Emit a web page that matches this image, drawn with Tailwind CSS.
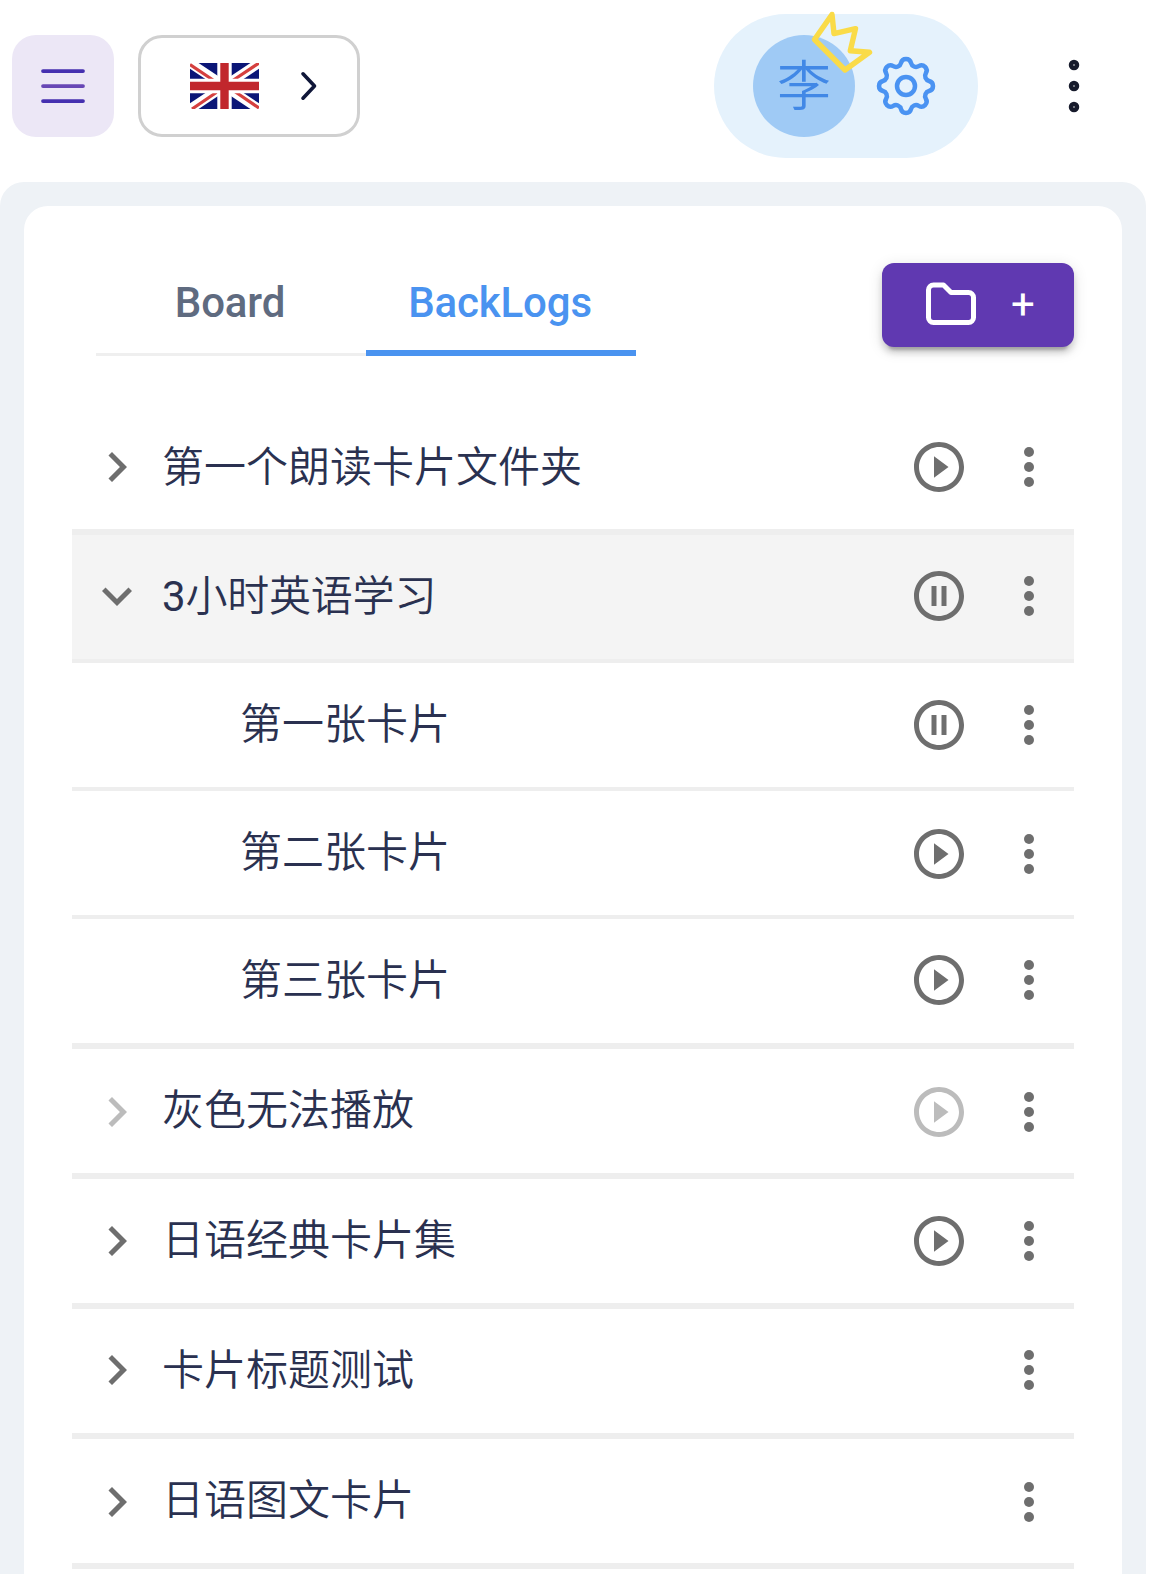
<!DOCTYPE html>
<html lang="zh">
<head>
<meta charset="utf-8">
<title>BackLogs</title>
<script src="https://cdn.jsdelivr.net/npm/@tailwindcss/browser@4"></script>
</head>
<body class="w-[1150px] h-[1574px] overflow-hidden bg-white font-[Roboto,'Noto_Sans_CJK_SC',sans-serif] text-[#2a3150]">
<svg class="hidden">
  <symbol id="right" viewBox="0 0 24 24"><path d="M10 6 8.59 7.41 13.17 12l-4.58 4.59L10 18l6-6z"/></symbol>
  <symbol id="down" viewBox="0 0 24 24"><path d="M16.59 8.59 12 13.17 7.41 8.59 6 10l6 6 6-6z"/></symbol>
  <symbol id="more" viewBox="0 0 24 24"><circle cx="12" cy="6" r="2"/><circle cx="12" cy="12" r="2"/><circle cx="12" cy="18" r="2"/></symbol>
  <symbol id="play" viewBox="0 0 24 24"><path d="M12 2C6.48 2 2 6.48 2 12s4.48 10 10 10 10-4.48 10-10S17.52 2 12 2zm0 18c-4.41 0-8-3.59-8-8s3.59-8 8-8 8 3.59 8 8-3.59 8-8 8zM10 7.7v8.6l5.8-4.3z"/></symbol>
  <symbol id="pause" viewBox="0 0 24 24"><path d="M12 2C6.48 2 2 6.48 2 12s4.48 10 10 10 10-4.48 10-10S17.52 2 12 2zm0 18c-4.41 0-8-3.59-8-8s3.59-8 8-8 8 3.59 8 8-3.59 8-8 8zM9 8h2v8H9zM13 8h2v8h-2z"/></symbol>
</svg>

<header class="flex h-[172px] items-center pl-3 pr-[40px] mb-[10px]">
  <button class="flex size-[102px] items-center justify-center rounded-3xl bg-[#ece7f6]">
    <svg class="size-[60px]" viewBox="0 0 24 24" fill="none" stroke-width="1.5" stroke-linecap="round"><path d="M4 6h16M4 18h16" stroke="#4530b0"/><path d="M4 12h16" stroke="#6747b5"/></svg>
  </button>
  <button class="ml-6 flex h-[102px] w-[222px] items-center rounded-3xl border-[3px] border-[#d0d0d0] pl-[49px]">
    <svg class="h-[46px] w-[69px]" viewBox="0 0 69 46">
      <rect width="69" height="46" fill="#0b1677"/>
      <path d="M0 0 69 46M69 0 0 46" stroke="#fff" stroke-width="9.5"/>
      <path d="M0 1.5 23 17M69 0 42 18M2 46 27 29M69 45 44 28" stroke="#d5403f" stroke-width="3.2"/>
      <path d="M34.5 0v46M0 23h69" stroke="#fff" stroke-width="14.4"/>
      <path d="M34.5 0v46M0 23h69" stroke="#c1272d" stroke-width="8.4"/>
    </svg>
    <svg class="ml-[40px] h-[32px] w-[20px]" viewBox="0 0 20 32" fill="none" stroke="#0f1638" stroke-width="3.6" stroke-linecap="round" stroke-linejoin="round"><path d="M4 3.8 15.5 16 4 28.2"/></svg>
  </button>
  <div class="relative ml-auto flex h-[144px] w-[264px] items-center rounded-full bg-[#e5f2fc] pl-[39px]">
    <div class="flex size-[102px] items-center justify-center rounded-full bg-[#9fcaf5] pt-[4px] text-[54px] font-[350] leading-none text-[#4188e6]">李</div>
    <svg class="ml-[15px] size-[72px]" viewBox="0 0 24 24" fill="none" stroke="#4a93f2" stroke-width="1.5" stroke-linecap="round" stroke-linejoin="round"><path d="M10.325 4.317c.426 -1.756 2.924 -1.756 3.35 0a1.724 1.724 0 0 0 2.573 1.066c1.543 -.94 3.31 .826 2.37 2.37a1.724 1.724 0 0 0 1.065 2.572c1.756 .426 1.756 2.924 0 3.35a1.724 1.724 0 0 0 -1.066 2.573c.94 1.543 -.826 3.31 -2.37 2.37a1.724 1.724 0 0 0 -2.572 1.065c-.426 1.756 -2.924 1.756 -3.35 0a1.724 1.724 0 0 0 -2.573 -1.066c-1.543 .94 -3.31 -.826 -2.37 -2.37a1.724 1.724 0 0 0 -1.065 -2.572c-1.756 -.426 -1.756 -2.924 0 -3.35a1.724 1.724 0 0 0 1.066 -2.573c-.94 -1.543 .826 -3.31 2.37 -2.37c1 .608 2.296 .07 2.572 -1.065z"/><circle cx="12" cy="12" r="3"/></svg>
    <svg class="absolute -top-[4px] left-[96px] h-[64px] w-[64px]" viewBox="0 0 64 64" fill="none" stroke="#fadb48" stroke-width="5.4" stroke-linejoin="round"><path d="M22 4.5 4.5 29.5 35 60 59.5 42.3 40.3 40.7 45.5 18.7 24 23.6z"/></svg>
  </div>
  <svg class="ml-[60px] size-[72px] shrink-0" viewBox="0 0 24 24" fill="none" stroke="#171b2c" stroke-width="1.5"><circle cx="12" cy="5" r="1"/><circle cx="12" cy="12" r="1"/><circle cx="12" cy="19" r="1"/></svg>
</header>

<div class="h-[1420px] w-[1146px] rounded-3xl bg-[#eef2f6] p-6">
  <main class="h-[1400px] rounded-3xl bg-white px-12 pt-[57px]">
    <div class="flex h-[142px] items-start justify-between pl-6">
      <nav class="flex h-[93px] text-[42px] font-medium leading-[49px] tracking-[-0.15px]">
        <div class="flex w-[270px] justify-center border-b-[3px] border-[#efefef] pr-[2px] pt-[15px] text-[#5f6b80]">Board</div>
        <div class="flex w-[270px] justify-center border-b-[6px] border-[#4a93f0] pr-[2px] pt-[15px] text-[#4a93f0]">BackLogs</div>
      </nav>
      <button class="flex h-[84px] w-[192px] items-center rounded-xl bg-[#6039b1] pl-[39px] text-[42px] text-white shadow-[0_9px_3px_-6px_rgba(0,0,0,0.2),0_6px_6px_rgba(0,0,0,0.14),0_3px_15px_rgba(0,0,0,0.12)]">
        <svg class="size-[60px]" viewBox="0 0 24 24" fill="none" stroke="#fff" stroke-width="2" stroke-linejoin="round"><path d="M5 4h4l3 3h7a2 2 0 0 1 2 2v8a2 2 0 0 1 -2 2h-14a2 2 0 0 1 -2 -2v-11a2 2 0 0 1 2 -2"/></svg>
        <span class="ml-[30px] font-normal leading-none">+</span>
      </button>
    </div>

    <ul class="fill-[#6e6e6e] text-[42px] font-[350] leading-[60px]">
      <li class="flex h-[130px] items-center border-b-[6px] border-[#eeeeee] px-[15px]">
        <svg class="size-[60px]"><use href="#right"/></svg><span class="ml-[15px] mr-auto pt-[1px]">第一个朗读卡片文件夹</span>
        <svg class="size-[60px]"><use href="#play"/></svg><svg class="ml-[30px] size-[60px]"><use href="#more"/></svg>
      </li>
      <li class="flex h-[128px] items-center border-b-4 border-[#eeeeee] bg-[#f4f4f4] px-[15px] pb-[2px]">
        <svg class="size-[60px]"><use href="#down"/></svg><span class="ml-[15px] mr-auto pt-[1px] tracking-[-0.2px]"><span class="font-normal">3</span>小时英语学习</span>
        <svg class="size-[60px]"><use href="#pause"/></svg><svg class="ml-[30px] size-[60px]"><use href="#more"/></svg>
      </li>
      <li class="flex h-[128px] items-center border-b-4 border-[#eeeeee] pl-[168px] pr-[15px]">
        <span class="mr-auto">第一张卡片</span>
        <svg class="size-[60px]"><use href="#pause"/></svg><svg class="ml-[30px] size-[60px]"><use href="#more"/></svg>
      </li>
      <li class="flex h-[128px] items-center border-b-4 border-[#eeeeee] pl-[168px] pr-[15px] pt-[2px]">
        <span class="mr-auto pb-[3px]">第二张卡片</span>
        <svg class="size-[60px]"><use href="#play"/></svg><svg class="ml-[30px] size-[60px]"><use href="#more"/></svg>
      </li>
      <li class="flex h-[130px] items-center border-b-[6px] border-[#eeeeee] pb-[2px] pl-[168px] pr-[15px]">
        <span class="mr-auto pt-[1px]">第三张卡片</span>
        <svg class="size-[60px]"><use href="#play"/></svg><svg class="ml-[30px] size-[60px]"><use href="#more"/></svg>
      </li>
      <li class="flex h-[130px] items-center border-b-[6px] border-[#eeeeee] px-[15px] pt-[2px]">
        <svg class="size-[60px] fill-[#bcbcbc]"><use href="#right"/></svg><span class="ml-[15px] mr-auto pb-[2px]">灰色无法播放</span>
        <svg class="size-[60px] fill-[#bcbcbc]"><use href="#play"/></svg><svg class="ml-[30px] size-[60px]"><use href="#more"/></svg>
      </li>
      <li class="flex h-[130px] items-center border-b-[6px] border-[#eeeeee] px-[15px]">
        <svg class="size-[60px]"><use href="#right"/></svg><span class="ml-[15px] mr-auto pb-[1px]">日语经典卡片集</span>
        <svg class="size-[60px]"><use href="#play"/></svg><svg class="ml-[30px] size-[60px]"><use href="#more"/></svg>
      </li>
      <li class="flex h-[130px] items-center border-b-[6px] border-[#eeeeee] px-[15px] pb-[2px]">
        <svg class="size-[60px]"><use href="#right"/></svg><span class="ml-[15px] mr-auto pt-[1px]">卡片标题测试</span>
        <svg class="size-[60px]"><use href="#more"/></svg>
      </li>
      <li class="flex h-[130px] items-center border-b-[6px] border-[#eeeeee] px-[15px] pt-[2px]">
        <svg class="size-[60px]"><use href="#right"/></svg><span class="ml-[15px] mr-auto pb-[2px]">日语图文卡片</span>
        <svg class="size-[60px]"><use href="#more"/></svg>
      </li>
    </ul>
  </main>
</div>
</body>
</html>
